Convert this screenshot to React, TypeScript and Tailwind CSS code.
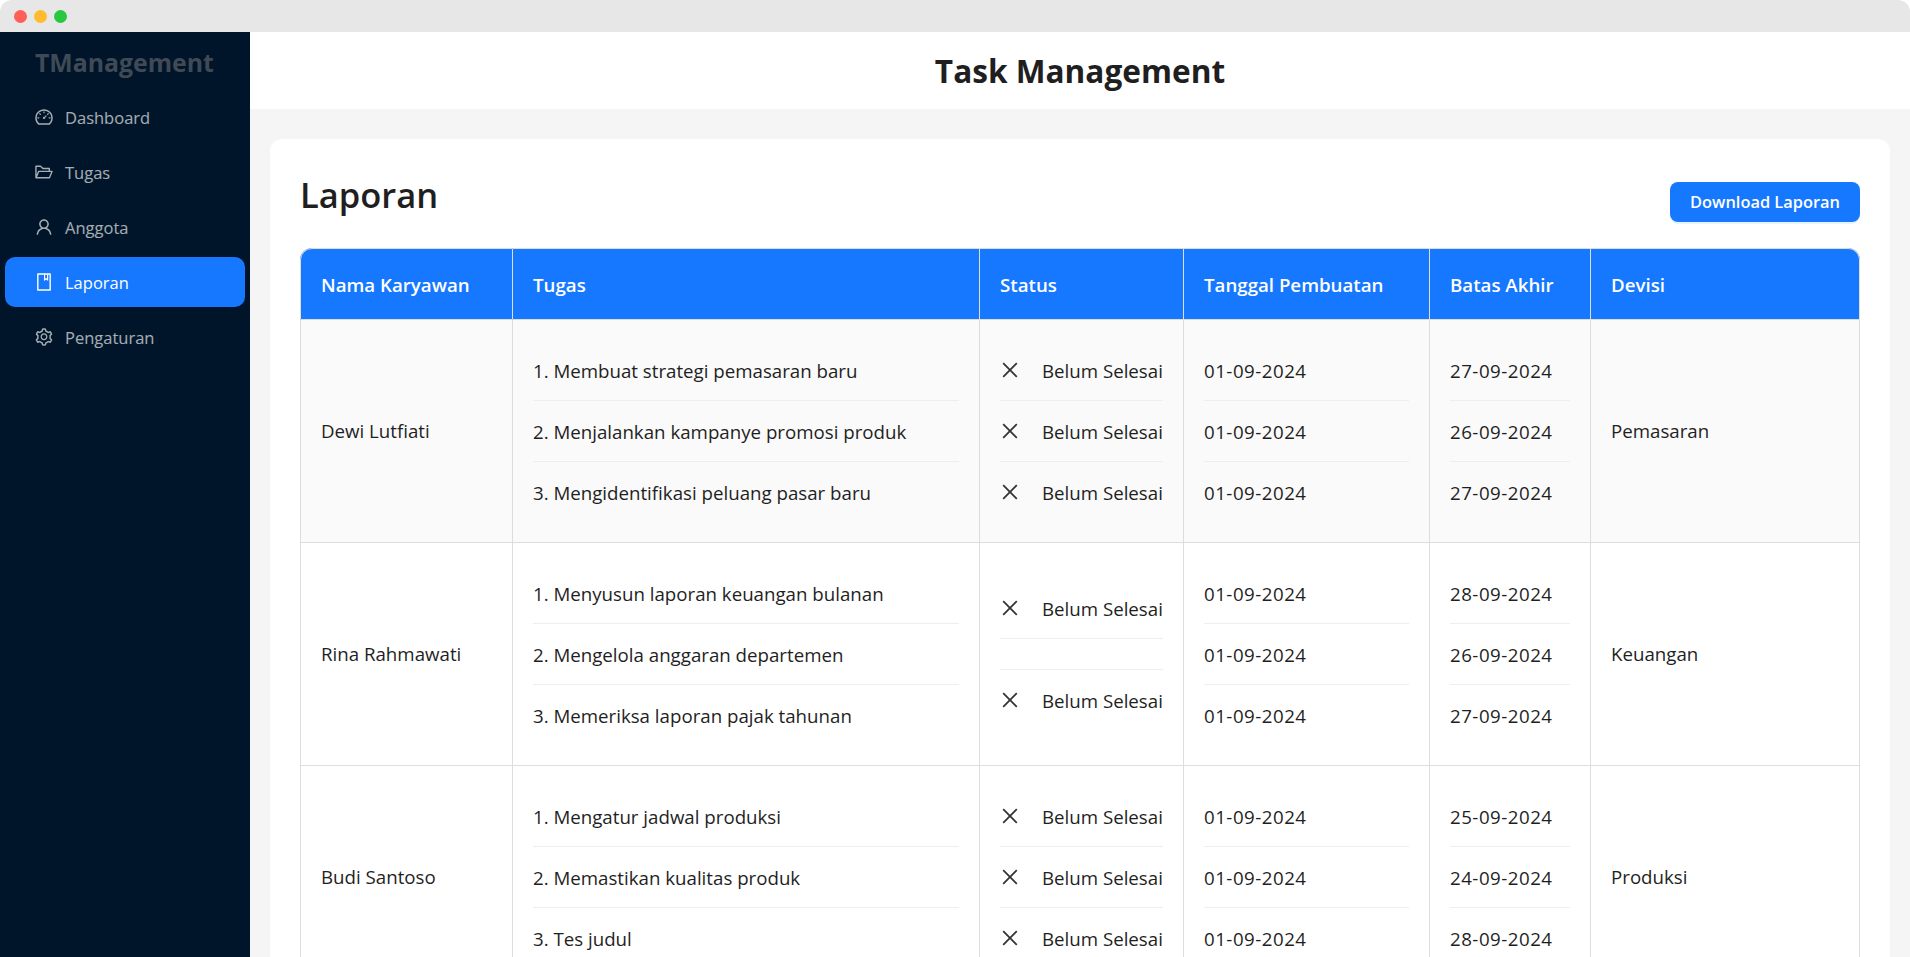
import React from "react";
import {
  AiOutlineBook,
  AiOutlineClose,
  AiOutlineDashboard,
  AiOutlineFolderOpen,
  AiOutlineSetting,
  AiOutlineUser,
} from "react-icons/ai";

const menu = [
  { label: "Dashboard", icon: AiOutlineDashboard },
  { label: "Tugas", icon: AiOutlineFolderOpen },
  { label: "Anggota", icon: AiOutlineUser },
  { label: "Laporan", icon: AiOutlineBook, active: true },
  { label: "Pengaturan", icon: AiOutlineSetting },
];

const rows = [
  {
    name: "Dewi Lutfiati",
    tasks: ["1. Membuat strategi pemasaran baru", "2. Menjalankan kampanye promosi produk", "3. Mengidentifikasi peluang pasar baru"],
    status: [true, true, true],
    created: ["01-09-2024", "01-09-2024", "01-09-2024"],
    due: ["27-09-2024", "26-09-2024", "27-09-2024"],
    division: "Pemasaran",
    bg: "bg-[#fafafa]",
  },
  {
    name: "Rina Rahmawati",
    tasks: ["1. Menyusun laporan keuangan bulanan", "2. Mengelola anggaran departemen", "3. Memeriksa laporan pajak tahunan"],
    status: [true, false, true],
    created: ["01-09-2024", "01-09-2024", "01-09-2024"],
    due: ["28-09-2024", "26-09-2024", "27-09-2024"],
    division: "Keuangan",
    bg: "bg-white",
  },
  {
    name: "Budi Santoso",
    tasks: ["1. Mengatur jadwal produksi", "2. Memastikan kualitas produk", "3. Tes judul"],
    status: [true, true, true],
    created: ["01-09-2024", "01-09-2024", "01-09-2024"],
    due: ["25-09-2024", "24-09-2024", "28-09-2024"],
    division: "Produksi",
    bg: "bg-white",
  },
];

function Stack({ children }: { children: React.ReactNode }) {
  return <ul className="divide-y divide-[#eeeeee]">{children}</ul>;
}

function Item({ children }: { children?: React.ReactNode }) {
  return <li className="pt-4 pb-[14px] leading-[30px] min-h-[30px]">{children}</li>;
}

const th = "border-r border-t border-b border-[#dddddd] px-5 pt-0.5 text-left font-semibold text-[18.7px] text-white";
const td = "border-r border-b border-[#dddddd] px-5 py-5 align-middle";
const tdText = "border-r border-b border-[#dddddd] px-5 pt-5 pb-5 align-middle";

export default function App() {
  return (
    <div className="h-screen overflow-hidden flex flex-col bg-white text-[18.7px] text-[#1f1f1f] font-['Open_Sans',sans-serif]">
      {/* title bar */}
      <div className="h-8 shrink-0 bg-[#e7e7e7] rounded-t-xl flex items-center gap-[7px] pl-[13.5px]">
        <span className="w-[13px] h-[13px] rounded-full bg-[#ff5f57]" />
        <span className="w-[13px] h-[13px] rounded-full bg-[#febc2e]" />
        <span className="w-[13px] h-[13px] rounded-full bg-[#28c840]" />
      </div>

      <div className="flex flex-1 min-h-0">
        {/* sidebar */}
        <aside className="w-[250px] shrink-0 bg-[#001529]">
          <div className="h-[60px] pl-[35px] pt-0.5 flex items-center text-[24.8px] font-bold text-[#3f4a56]">TManagement</div>
          <nav className="flex flex-col gap-[5px] px-[5px]">
            {menu.map((m) => {
              const Icon = m.icon;
              return (
                <a
                  key={m.label}
                  className={
                    m.active
                      ? "h-[50px] flex items-center gap-[11px] pl-[29px] rounded-[10px] bg-[#1677ff] text-white text-[16.5px]"
                      : "h-[50px] flex items-center gap-[11px] pl-[29px] rounded-[10px] text-white/65 text-[16.5px]"
                  }
                >
                  <Icon className="w-5 h-5" />
                  <span className="pt-0.5">{m.label}</span>
                </a>
              );
            })}
          </nav>
        </aside>

        <div className="flex-1 min-w-0 flex flex-col bg-[#f5f5f5]">
          <header className="h-[77px] shrink-0 bg-white flex items-center justify-center">
            <h1 className="text-[31.6px] font-bold text-[#1f1f1f]">Task Management</h1>
          </header>

          <main className="px-5 pt-[30px]">
            <div className="bg-white rounded-xl p-[30px]">
              <div className="flex items-end justify-between mb-[25px]">
                <h2 className="text-[34.5px] leading-[52px] pb-0.5 font-semibold">Laporan</h2>
                <button className="w-[190px] h-10 mb-px pt-px rounded-lg bg-[#1677ff] text-white text-[16.4px] font-semibold shadow-[0_2px_0_rgba(5,145,255,0.1)]">
                  Download Laporan
                </button>
              </div>

              <table className="w-full table-fixed border-separate border-spacing-0">
                <colgroup>
                  <col className="w-[213px]" />
                  <col className="w-[467px]" />
                  <col className="w-[204px]" />
                  <col className="w-[246px]" />
                  <col className="w-[161px]" />
                  <col className="w-[269px]" />
                </colgroup>
                <thead>
                  <tr className="h-[72px] bg-[#1677ff]">
                    <th className={th + " border-l rounded-tl-xl"}>Nama Karyawan</th>
                    <th className={th}>Tugas</th>
                    <th className={th}>Status</th>
                    <th className={th}>Tanggal Pembuatan</th>
                    <th className={th}>Batas Akhir</th>
                    <th className={th + " rounded-tr-xl"}>Devisi</th>
                  </tr>
                </thead>
                <tbody>
                  {rows.map((r) => (
                    <tr key={r.name} className={r.bg}>
                      <td className={tdText + " border-l"}>{r.name}</td>
                      <td className={td}>
                        <Stack>{r.tasks.map((t) => <Item key={t}>{t}</Item>)}</Stack>
                      </td>
                      <td className={td}>
                        <Stack>
                          {r.status.map((s, i) => (
                            <Item key={i}>
                              {s && (
                                <span className="flex items-center gap-[21px] -ml-px whitespace-nowrap">
                                  <AiOutlineClose className="w-[22px] h-[22px] -mt-0.5 shrink-0 text-[#333333]" />
                                  Belum Selesai
                                </span>
                              )}
                            </Item>
                          ))}
                        </Stack>
                      </td>
                      <td className={td + " tracking-[0.5px]"}>
                        <Stack>{r.created.map((d, i) => <Item key={i}>{d}</Item>)}</Stack>
                      </td>
                      <td className={td + " tracking-[0.5px]"}>
                        <Stack>{r.due.map((d, i) => <Item key={i}>{d}</Item>)}</Stack>
                      </td>
                      <td className={tdText}>{r.division}</td>
                    </tr>
                  ))}
                </tbody>
              </table>
            </div>
          </main>
        </div>
      </div>
    </div>
  );
}
